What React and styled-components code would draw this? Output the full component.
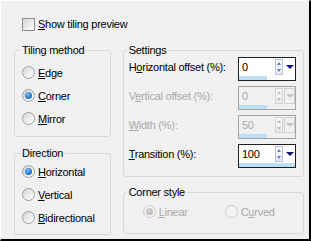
import React from "react";
import styled, { createGlobalStyle } from "styled-components";

const GlobalStyle = createGlobalStyle`
  html, body {
    margin: 0;
    padding: 0;
    background: #f0f0f0;
  }
  body {
    font-family: "Liberation Sans", Arial, sans-serif;
    font-size: 11px;
    color: #000;
  }
`;

const Dialog = styled.div`
  box-sizing: border-box;
  width: 311px;
  height: 241px;
  padding: 17px 5px 0 13px;
  background: #f0f0f0;
  border-top: 1px solid #fff;
  border-left: 1px solid #fff;
  border-right: 2px solid #000;
  border-bottom: 2px solid #000;
  letter-spacing: -0.25px;
`;

const CheckRow = styled.label`
  display: flex;
  align-items: center;
  gap: 3px;
  height: 13px;
  margin-left: 8px;
  line-height: 13px;
`;

const CheckBox = styled.span`
  box-sizing: border-box;
  width: 13px;
  height: 13px;
  border: 1px solid #8e8f8f;
  background: linear-gradient(135deg, #d4d4d4 0%, #ececec 55%, #ffffff 100%);
`;

const Columns = styled.div`
  display: flex;
  gap: 12px;
  margin-top: 13px;
`;

const Column = styled.div`
  display: flex;
  flex-direction: column;
  width: ${(p) => p.$width}px;
  gap: ${(p) => p.$gap}px;
`;

const Group = styled.fieldset`
  margin: 0;
  min-width: 0;
  border: 1px solid #d3d9df;
  border-radius: 3px;
  padding: ${(p) => p.$pad};
`;

const Legend = styled.legend`
  padding: 0 2px;
  margin-left: -2px;
  line-height: 13px;
  color: #000;
`;

const RadioList = styled.div`
  display: flex;
  flex-direction: ${(p) => (p.$row ? "row" : "column")};
  padding-left: ${(p) => p.$indent || 0}px;
`;

const RadioRow = styled.label`
  display: flex;
  align-items: center;
  gap: 3px;
  height: 23px;
  width: ${(p) => (p.$width ? `${p.$width}px` : "auto")};
  color: ${(p) => (p.$disabled ? "#a8a8a8" : "#000")};
`;

const RadioDot = styled.span`
  box-sizing: border-box;
  flex: none;
  width: 13px;
  height: 13px;
  border-radius: 50%;
  border: 1px solid ${(p) => (p.$disabled ? "#cbcbcb" : "#97a0aa")};
  background: ${(p) =>
    p.$disabled
      ? "#f1f1f1"
      : "linear-gradient(135deg, #d3d3d3 0%, #eeeeee 55%, #ffffff 100%)"};
  display: flex;
  align-items: center;
  justify-content: center;
  &::after {
    content: "";
    display: ${(p) => (p.$checked ? "block" : "none")};
    width: 7px;
    height: 7px;
    border-radius: 50%;
    background: ${(p) =>
      p.$disabled
        ? "radial-gradient(circle at 40% 35%, #d8d8d8, #b4b4b4 75%)"
        : "radial-gradient(circle at 40% 35%, #7cc0f8 0%, #2a78d0 55%, #10468f 100%)"};
  }
`;

const Key = styled.u`
  text-decoration: underline;
  text-underline-offset: 1px;
`;

const FieldRow = styled.div`
  display: flex;
  height: 24px;
  color: ${(p) => (p.$disabled ? "#a8a8a8" : "#000")};
`;

const FieldLabel = styled.span`
  flex: 1;
  padding-top: 4px;
  line-height: 13px;
`;

const Fields = styled.div`
  display: flex;
  flex-direction: column;
  gap: 5px;
`;

const SpinBox = styled.div`
  box-sizing: border-box;
  width: 58px;
  height: 24px;
  border: 1px solid ${(p) => (p.$disabled ? "#a3a3a3" : "#1e1e1e")};
  background: ${(p) => (p.$disabled ? "#f0f0f0" : "#fff")};
  display: flex;
  flex-direction: column;
`;

const SpinTop = styled.div`
  display: flex;
  align-items: center;
  height: 18px;
`;

const SpinValue = styled.span`
  flex: 1;
  padding-left: 3px;
  line-height: 18px;
  color: ${(p) => (p.$disabled ? "#a8a8a8" : "#000")};
`;

const Spinner = styled.span`
  box-sizing: border-box;
  width: 8px;
  height: 16px;
  border: 1px solid ${(p) => (p.$disabled ? "#d2d2d2" : "#b8c2d2")};
  background: linear-gradient(180deg, #fafbfd, #e6eaf0);
  display: flex;
  flex-direction: column;
  align-items: center;
  justify-content: space-around;
  &::before,
  &::after {
    content: "";
    width: 0;
    height: 0;
    border-left: 2.5px solid transparent;
    border-right: 2.5px solid transparent;
  }
  &::before {
    border-bottom: 3px solid ${(p) => (p.$disabled ? "#bdbdbd" : "#5f7fbf")};
  }
  &::after {
    border-top: 3px solid ${(p) => (p.$disabled ? "#bdbdbd" : "#5f7fbf")};
  }
`;

const DropButton = styled.span`
  box-sizing: border-box;
  width: 11px;
  height: 16px;
  margin-left: 1px;
  border: 1px solid ${(p) => (p.$disabled ? "#d0d0d0" : "transparent")};
  display: flex;
  align-items: center;
  justify-content: center;
  &::after {
    content: "";
    width: 0;
    height: 0;
    border-left: 4px solid transparent;
    border-right: 4px solid transparent;
    border-top: 4px solid ${(p) => (p.$disabled ? "#c4c4c4" : "#0b1a6e")};
  }
`;

const SpinBar = styled.span`
  display: block;
  height: 4px;
  margin-top: auto;
  width: ${(p) => p.$fill * 100}%;
  background: #bcdff6;
`;

const Radio = ({ label, k, checked, disabled, width }) => {
  const i = label.indexOf(k);
  return (
    <RadioRow $disabled={disabled} $width={width}>
      <RadioDot $checked={checked} $disabled={disabled} />
      <span>
        {label.slice(0, i)}
        <Key>{k}</Key>
        {label.slice(i + 1)}
      </span>
    </RadioRow>
  );
};

const Field = ({ label, k, at, value, fill, disabled }) => (
  <FieldRow $disabled={disabled}>
    <FieldLabel>
      {label.slice(0, at)}
      <Key>{k}</Key>
      {label.slice(at + 1)}
    </FieldLabel>
    <SpinBox $disabled={disabled}>
      <SpinTop>
        <SpinValue $disabled={disabled}>{value}</SpinValue>
        <Spinner $disabled={disabled} />
        <DropButton $disabled={disabled} />
      </SpinTop>
      <SpinBar $fill={fill} />
    </SpinBox>
  </FieldRow>
);

export default function App() {
  return (
    <>
      <GlobalStyle />
      <Dialog>
        <CheckRow>
          <CheckBox />
          <span>
            <Key>S</Key>how tiling preview
          </span>
        </CheckRow>
        <Columns>
          <Column $width={97} $gap={10}>
            <Group $pad="4px 4px 6px 7px">
              <Legend>Tiling method</Legend>
              <RadioList>
                <Radio label="Edge" k="E" />
                <Radio label="Corner" k="C" checked />
                <Radio label="Mirror" k="M" />
              </RadioList>
            </Group>
            <Group $pad="0 4px 5px 7px">
              <Legend>Direction</Legend>
              <RadioList>
                <Radio label="Horizontal" k="H" checked />
                <Radio label="Vertical" k="V" />
                <Radio label="Bidirectional" k="B" />
              </RadioList>
            </Group>
          </Column>
          <Column $width={182} $gap={9}>
            <Group $pad="0 7px 8px 5px">
              <Legend>Settings</Legend>
              <Fields>
                <Field label="Horizontal offset (%):" k="o" at={1} value="0" fill={0.5} />
                <Field label="Vertical offset (%):" k="e" at={1} value="0" fill={0.5} disabled />
                <Field label="Width (%):" k="W" at={0} value="50" fill={0.5} disabled />
                <Field label="Transition (%):" k="T" at={0} value="100" fill={1} />
              </Fields>
            </Group>
            <Group $pad="1px 7px 10px 5px">
              <Legend>Corner style</Legend>
              <RadioList $row $indent={14}>
                <Radio label="Linear" k="L" checked disabled width={82} />
                <Radio label="Curved" k="u" disabled />
              </RadioList>
            </Group>
          </Column>
        </Columns>
      </Dialog>
    </>
  );
}
